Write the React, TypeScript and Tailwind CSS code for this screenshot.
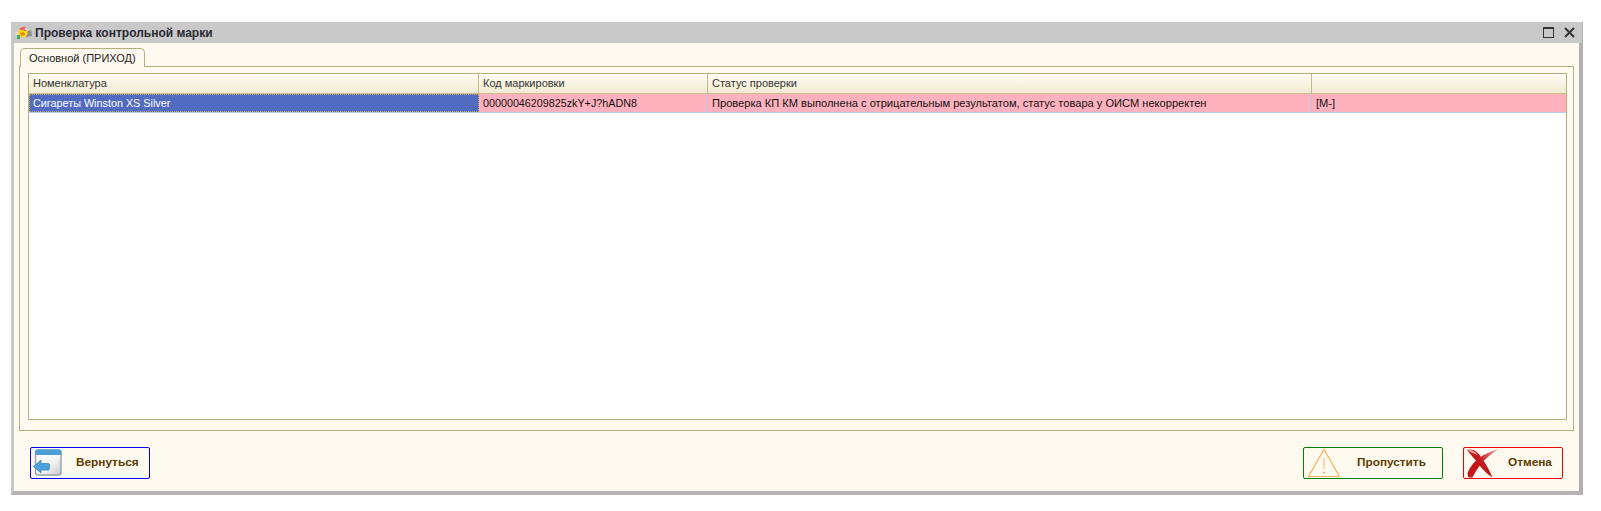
import React from 'react';

const font = "font-['Liberation_Sans',Arial,sans-serif]";

const AppIcon = () => (
    <svg width="17" height="13" viewBox="0 0 17 13" className="shrink-0">
        <path d="M0 7 L5 4 L8 10 L3 12 Z" fill="#e4e0d4" />
        <path d="M10 6 L16 4 L17 10 L11 11 Z" fill="#8c8c8c" />
        <circle cx="8" cy="6.5" r="4.8" fill="#f6d61e" />
        <path d="M4 3 Q8 -1 12 2 L11 5 L6 4 Z" fill="#f0606a" />
        <path d="M5 7 L9 6 L10 9 L6 10 Z" fill="#f08a24" />
        <rect x="2" y="9" width="3" height="4" fill="#4aa860" />
        <rect x="10" y="2" width="2" height="2" fill="#f8f4d0" />
    </svg>
);

const BackIcon = () => (
    <svg width="29" height="28" viewBox="0 0 29 28" className="shrink-0">
        <defs>
            <linearGradient id="backBody" x1="0" y1="0" x2="1" y2="1">
                <stop offset="0" stopColor="#ffffff" />
                <stop offset="0.6" stopColor="#f2f3f4" />
                <stop offset="1" stopColor="#c4c8cc" />
            </linearGradient>
        </defs>
        <rect x="2.5" y="1" width="25.5" height="25" rx="2.5" fill="url(#backBody)" stroke="#9aa3ab" strokeWidth="1.4" />
        <path d="M2 6 V3 A2.5 2.5 0 0 1 4.5 0.5 H26 A2.5 2.5 0 0 1 28.5 3 V6 Z" fill="#4a9fd4" />
        <path d="M0.5 17.5 L8 11 V14.5 H15 A1.5 1.5 0 0 1 16.5 16 V19.5 A1.5 1.5 0 0 1 15 21 H8 V24 Z" fill="#4aa3dc" stroke="#3a86b8" strokeWidth="0.8" />
    </svg>
);

const WarnIcon = () => (
    <svg width="34" height="30" viewBox="0 0 34 30" className="shrink-0">
        <path d="M17 1.5 L32.5 28.5 H1.5 Z" fill="#fffaf0" stroke="#f8b060" strokeWidth="1.2" />
        <path d="M17 10 V21" stroke="#f8b060" strokeWidth="1" />
        <circle cx="17" cy="24.5" r="1" fill="#f0a050" />
    </svg>
);

const CrossIcon = () => (
    <svg width="36" height="31" viewBox="0 0 36 31" className="shrink-0">
        <defs>
            <linearGradient id="crossFade" x1="0" y1="0" x2="0" y2="1">
                <stop offset="0" stopColor="#c8141a" />
                <stop offset="0.7" stopColor="#c5161b" />
                <stop offset="1" stopColor="#f0b8b8" />
            </linearGradient>
            <linearGradient id="crossTail" x1="0" y1="1" x2="1" y2="0">
                <stop offset="0.5" stopColor="#c5161b" />
                <stop offset="1" stopColor="#eeb0b0" />
            </linearGradient>
        </defs>
        <path d="M3 2 C9 0 14 4 17 9 C20 13 25 21 28.5 29.5 C23 26 17 20 13 14 C10 10 6 6 3 2 Z" fill="#c5161b" />
        <path d="M3 2 C7 1 11 3 14 7 C10 6 6 4 3 2 Z" fill="#ee9a9a" />
        <path d="M34.5 1 C27 6 21 11 17 16 C13 21 10 26 8 30 C5 31 3 28 4 24 C6 19 10 14 14 11 C20 6 27 3 34.5 1 Z" fill="url(#crossTail)" />
        <path d="M4 24 C3 28 5 31 8 30 C9 28 10 26 11 24 Z" fill="url(#crossFade)" />
    </svg>
);

const columns = [
    { title: 'Номенклатура', width: 'w-[450px]' },
    { title: 'Код маркировки', width: 'w-[229px]' },
    { title: 'Статус проверки', width: 'w-[604px]' },
    { title: '', width: 'flex-1' },
];

const App: React.FC = () => {
    return (
        <div className={`w-[1601px] h-[511px] bg-white pt-[22px] pl-[11px] ${font}`}>
            <div className="w-[1572px] h-[473px] flex flex-col bg-[#fffaef] border-l-[3px] border-r-[4px] border-b-[4px] border-l-[#c8c8c8] border-r-[#b0b0b0] border-b-[#b4b4b4]">
                <div className="h-[21px] -ml-[3px] -mr-[3px] pl-[4px] pr-[7px] bg-[#c9c9c9] flex items-center gap-[3px] shrink-0">
                    <AppIcon />
                    <span className="text-[12px] font-bold text-[#2a2a33] pt-px">Проверка контрольной марки</span>
                    <div className="ml-auto flex items-center gap-[10px]">
                        <div className="w-[11px] h-[11px] border border-[#333] border-t-2" />
                        <svg width="11" height="11" viewBox="0 0 11 11">
                            <path d="M1 1 L10 10 M10 1 L1 10" stroke="#333" strokeWidth="2" />
                        </svg>
                    </div>
                </div>

                <div className="flex-1 flex flex-col pl-[5px] pr-[5px] pt-[5px]">
                    <div className="h-[19px] -mb-px relative z-10 flex">
                        <div className="w-[125px] ml-px h-[19px] border border-b-0 border-[#b7ad7d] rounded-t-[5px] bg-[#fffaef] text-[11px] text-[#222] flex items-center pl-[8px]">
                            Основной (ПРИХОД)
                        </div>
                    </div>
                    <div className="h-[365px] border border-[#b7ad7d] pt-[6px] pr-[6px] pb-[10px] pl-[8px] flex">
                        <div className="flex-1 border border-[#b7ad7d] bg-white flex flex-col">
                            <div className="h-[20px] flex bg-gradient-to-b from-[#fffdf5] to-[#f0ebd0] border-b border-[#c9bd90] text-[11px] text-[#333]">
                                {columns.map((col, i) => (
                                    <div key={i} className={`${col.width} pl-[4px] flex items-center ${i < 3 ? 'border-r border-[#c4ba8c]' : ''}`}>
                                        {col.title}
                                    </div>
                                ))}
                            </div>
                            <div className="h-[19px] flex text-[11.1px] text-[#111] border-b border-[#afcbe6]">
                                <div className="w-[450px] pl-[3px] flex items-center bg-[#516bc1] text-white text-[10.8px] border border-dotted border-[#c0a860]">Сигареты Winston XS Silver</div>
                                <div className="w-[229px] pl-[4px] flex items-center bg-[#ffb1be] text-[10.75px] border-r border-[#afcbe6]">00000046209825zkY+J?hADN8</div>
                                <div className="w-[604px] pl-[4px] flex items-center bg-[#ffb1be] border-r border-[#afcbe6]">Проверка КП КМ выполнена с отрицательным результатом, статус товара у ОИСМ некорректен</div>
                                <div className="flex-1 pl-[4px] flex items-center bg-[#ffb1be]">[М-]</div>
                            </div>
                        </div>
                    </div>

                    <div className="flex-1 flex items-start pt-[16px] pl-[11px] pr-[11px]">
                        <button className="w-[120px] h-[32px] border border-[#0000ee] rounded-[2px] flex items-center pl-[2px]">
                            <BackIcon />
                            <span className="ml-[14px] text-[11.8px] font-bold text-[#5c3a00]">Вернуться</span>
                        </button>
                        <button className="ml-auto w-[140px] h-[32px] border border-[#008000] rounded-[2px] flex items-center pl-[3px] overflow-hidden">
                            <WarnIcon />
                            <span className="ml-[16px] text-[11.8px] font-bold text-[#5c3a00]">Пропустить</span>
                        </button>
                        <button className="ml-[20px] w-[100px] h-[32px] border border-[#ee0000] rounded-[2px] flex items-center overflow-hidden">
                            <CrossIcon />
                            <span className="ml-[8px] text-[11.8px] font-bold text-[#5c3a00]">Отмена</span>
                        </button>
                    </div>
                </div>
            </div>
        </div>
    );
};

export default App;
